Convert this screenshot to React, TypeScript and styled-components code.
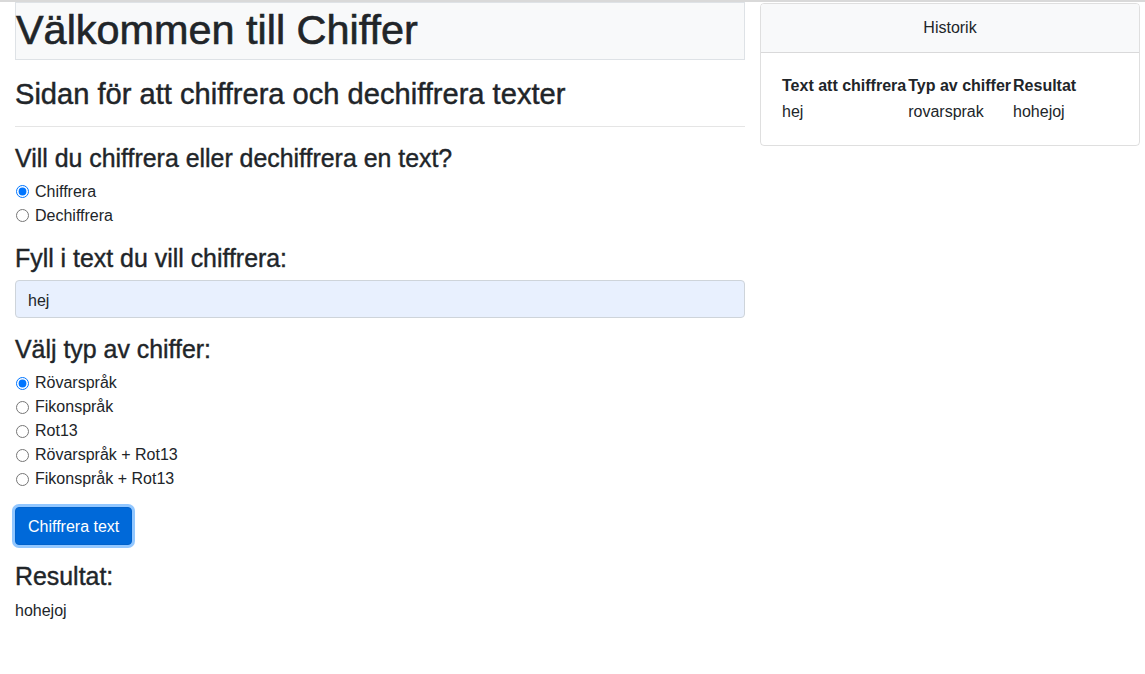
import { useState } from 'react'
import styled, { createGlobalStyle } from 'styled-components'

const GlobalStyle = createGlobalStyle`
  body {
    margin: 0;
    border-top: 2px solid #d9d9d9;
    font-family: 'Liberation Sans', Arial, sans-serif;
    font-size: 16px;
    line-height: 1.5;
    color: #212529;
    background: #fff;
  }
  * { box-sizing: border-box; }
`

const Page = styled.div`
  display: flex;
  align-items: flex-start;
  gap: 15px;
  padding: 0 5px 0 15px;
`

const Main = styled.div`
  width: 730px;
  flex-shrink: 0;
`

const TitleBox = styled.div`
  background: #f8f9fa;
  border: 1px solid #dee2e6;
`

const Title = styled.h1`
  margin: 0 0 8px;
  font-size: 41.4px;
  font-weight: 400;
  -webkit-text-stroke: 0.6px currentColor;
  line-height: 48px;
  padding-top: 3px;
  height: 48px;
`

const SubTitle = styled.h3`
  margin: 16px 0 0;
  font-size: 29.1px;
  font-weight: 400;
  -webkit-text-stroke: 0.45px currentColor;
  line-height: 33.6px;
  padding-top: 2px;
  height: 33.6px;
`

const Divider = styled.hr`
  margin: 16px 0;
  border: 0;
  border-top: 1px solid rgba(0, 0, 0, 0.1);
`

const Heading = styled.h4`
  margin: 0 0 8px;
  font-size: 24.9px;
  font-weight: 400;
  -webkit-text-stroke: 0.4px currentColor;
  line-height: 28.8px;
  padding-top: 1px;
  height: 28.8px;
`

const Group = styled.div`
  margin-bottom: 16px;
`

const RadioRow = styled.label`
  display: flex;
  align-items: center;
  gap: 6px;
  height: 24px;
  padding: 1px 0 0 1px;

  input {
    margin: 0;
    width: 13px;
    height: 13px;
  }
`

const TextInput = styled.input`
  display: block;
  width: 100%;
  height: 38px;
  padding: 8px 12px 4px;
  font: inherit;
  color: #212529;
  background: #e8f0fe;
  border: 1px solid #ced4da;
  border-radius: 4px;
  outline: none;
`

const Button = styled.button`
  display: inline-block;
  height: 38px;
  padding: 7px 12px 5px;
  font: inherit;
  color: #fff;
  background: #0069d9;
  border: 1px solid #0062cc;
  border-radius: 4px;
  box-shadow: 0 0 0 3px rgba(38, 143, 255, 0.5);
  cursor: pointer;
`

const Result = styled.div`
  line-height: 24px;
  padding-top: 1px;
`

const Card = styled.div`
  width: 380px;
  margin-top: 1px;
  border: 1px solid rgba(0, 0, 0, 0.125);
  border-radius: 4px;
  overflow: hidden;
`

const CardHeader = styled.div`
  padding: 12px 20px;
  text-align: center;
  background: #f8f9fa;
  border-bottom: 1px solid rgba(0, 0, 0, 0.125);
`

const CardBody = styled.div`
  padding: 20px;
`

const Table = styled.table`
  border-collapse: collapse;

  th, td {
    padding: 1px;
    text-align: left;
    white-space: nowrap;
  }
  th { font-weight: 700; }
`

const modes = ['Chiffrera', 'Dechiffrera']
const ciphers = ['Rövarspråk', 'Fikonspråk', 'Rot13', 'Rövarspråk + Rot13', 'Fikonspråk + Rot13']

export default function App() {
  const [mode, setMode] = useState('Chiffrera')
  const [cipher, setCipher] = useState('Rövarspråk')
  const [text, setText] = useState('hej')

  return (
    <>
      <GlobalStyle />
      <Page>
        <Main>
          <TitleBox>
            <Title>Välkommen till Chiffer</Title>
          </TitleBox>
          <SubTitle>Sidan för att chiffrera och dechiffrera texter</SubTitle>
          <Divider />

          <Heading>Vill du chiffrera eller dechiffrera en text?</Heading>
          <Group>
            {modes.map((m) => (
              <RadioRow key={m}>
                <input type='radio' name='mode' checked={mode === m} onChange={() => setMode(m)} />
                {m}
              </RadioRow>
            ))}
          </Group>

          <Heading>Fyll i text du vill chiffrera:</Heading>
          <Group>
            <TextInput value={text} onChange={(e) => setText(e.target.value)} />
          </Group>

          <Heading>Välj typ av chiffer:</Heading>
          <Group>
            {ciphers.map((c) => (
              <RadioRow key={c}>
                <input type='radio' name='cipher' checked={cipher === c} onChange={() => setCipher(c)} />
                {c}
              </RadioRow>
            ))}
          </Group>

          <Group>
            <Button type='button'>Chiffrera text</Button>
          </Group>

          <Heading>Resultat:</Heading>
          <Result>hohejoj</Result>
        </Main>

        <Card>
          <CardHeader>Historik</CardHeader>
          <CardBody>
            <Table>
              <thead>
                <tr>
                  <th>Text att chiffrera</th>
                  <th>Typ av chiffer</th>
                  <th>Resultat</th>
                </tr>
              </thead>
              <tbody>
                <tr>
                  <td>hej</td>
                  <td>rovarsprak</td>
                  <td>hohejoj</td>
                </tr>
              </tbody>
            </Table>
          </CardBody>
        </Card>
      </Page>
    </>
  )
}
